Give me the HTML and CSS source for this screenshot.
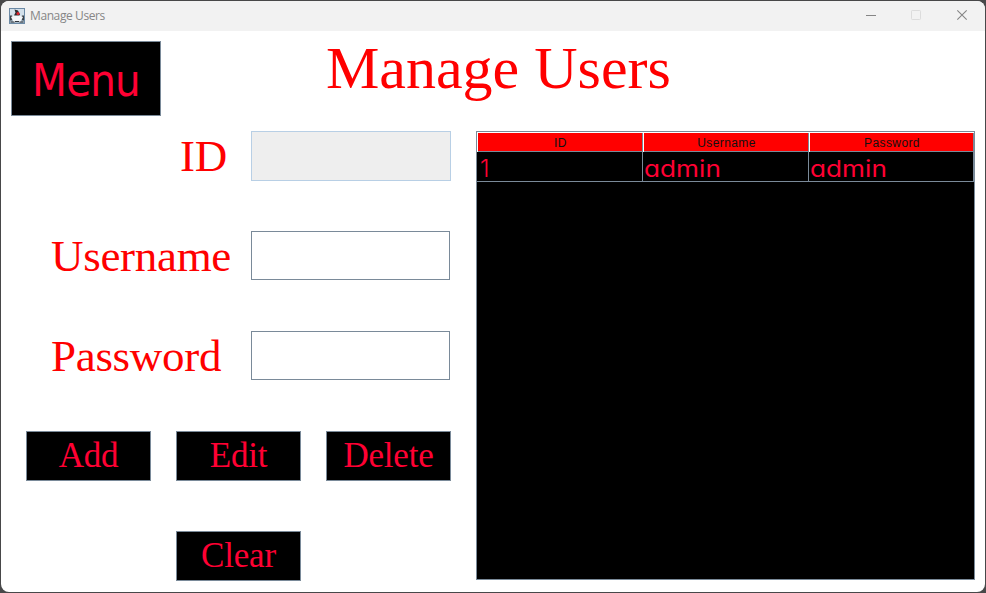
FILE: index.html
```html
<!DOCTYPE html>
<html lang="en">
<head>
<meta charset="utf-8">
<title>Manage Users</title>
<link rel="stylesheet" href="styles.css">
</head>
<body>
<div class="window">
  <header class="titlebar">
    <svg class="app-icon" width="16" height="16" viewBox="0 0 16 16">
      <rect x=".5" y=".5" width="15" height="15" fill="#d3e0ea" stroke="#6c8aa5"/>
      <rect x="1" y="9" width="14" height="6" fill="#a9bccb"/>
      <path d="M5.500 1.500L9 2.500l2 4-1 2H6l-1-1 1.500-3z" fill="#2b2b2e"/>
      <path d="M1 7.500l2 0 1 2-1.500 3H1zM15 7.500l-2 0-1 2 1.500 3H15z" fill="#3b4147"/>
      <path d="M2 9l3-1.500h6L14 9l-1 2-1 1v2H4v-2l-1-1z" fill="#f4f6f8"/>
      <circle cx="9" cy="5.500" r="1.500" fill="#e0202a"/>
      <path d="M1.500 14h4M6 13.500h4M10.500 14h4" stroke="#30343a"/>
    </svg>
    <span class="caption">Manage Users</span>
    <svg class="controls" width="120" height="30" viewBox="0 0 120 30" fill="none">
      <path d="M1 14.5h10" stroke="#858585"/>
      <rect x="46.5" y="9.5" width="9" height="9" rx=".8" stroke="#dcdcdc"/>
      <path d="M92.3 9.3l9.4 9.4M101.7 9.3l-9.4 9.4" stroke="#858585" stroke-width="1.1"/>
    </svg>
  </header>
  <main class="content">
    <div class="top">
      <button class="btn menu"><span class="menu-text">Menu</span></button>
      <h1 class="heading">Manage Users</h1>
    </div>
    <div class="columns">
      <section class="form">
        <div class="row"><label class="label label-id">ID</label><div class="field disabled"></div></div>
        <div class="row"><label class="label">Username</label><div class="field"></div></div>
        <div class="row"><label class="label">Password</label><div class="field"></div></div>
        <div class="actions">
          <button class="btn">Add</button>
          <button class="btn">Edit</button>
          <button class="btn">Delete</button>
        </div>
        <div class="actions"><button class="btn clear">Clear</button></div>
      </section>
      <section class="table">
        <div class="tr head"><div class="th">ID</div><div class="th">Username</div><div class="th">Password</div></div>
        <div class="tr"><div class="td one">1</div><div class="td"><span class="wide">admin</span></div><div class="td"><span class="wide">admin</span></div></div>
      </section>
    </div>
  </main>
</div>
</body>
</html>
```

FILE: styles.css
```css
* { box-sizing: border-box; }
body { margin: 0; height: 593px; padding: 1px; background: #484849; overflow: hidden; }
.window { width: 984px; height: 591px; background: #fff; border-radius: 8px; overflow: hidden; }
.titlebar { height: 30px; display: flex; align-items: center; padding-left: 8px; background: #f2f2f2; }
.app-icon { margin-top: -1px; }
.caption { margin-left: 5px; font: 12px/30px "Open Sans", sans-serif; letter-spacing: -.4px; color: #868686; }
.controls { margin-left: auto; }
.content { padding: 10px; }
.top { display: flex; height: 90px; }
.btn {
  width: 125px; height: 50px; padding: 0; border: 1px solid #7a8a99; background: #000; color: #ff0033;
  font: 35px/48px "Liberation Serif", serif; letter-spacing: -.2px; text-align: center;
}
.menu {
  width: 150px; height: 75px; font: 45px/73px "DejaVu Sans Condensed", "DejaVu Sans", sans-serif;
  letter-spacing: -.8px;
}
.menu-text { display: block; padding-top: 2px; }
.heading { margin: 0 0 0 165px; font: 60px/54px "Liberation Serif", serif; color: #f00; white-space: nowrap; }
.columns { display: flex; gap: 25px; }
.form { width: 440px; display: flex; flex-direction: column; gap: 50px; }
.row { display: flex; height: 50px; }
.label { width: 240px; padding-left: 40px; font: 45px/50px "Liberation Serif", serif; letter-spacing: -.3px; color: #f00; }
.label-id { padding-left: 169px; }
.field { width: 199px; height: 49px; border: 1px solid #7a8a99; }
.disabled { width: 200px; height: 50px; background: #eee; border-color: #b8cfe5; }
.actions { display: flex; gap: 25px; padding-left: 15px; }
.clear { margin-left: 150px; }
.table { width: 499px; height: 449px; border: 1px solid #7a8a99; background: #000; }
.tr { display: grid; grid-template-columns: 166px 166px 165px; }
.th {
  height: 20px; background: #f00; color: #111; border: solid #fff; border-width: 1px 0 0 1px;
  box-shadow: inset -1px -1px #7a8a99; font: 12px/20px "Liberation Sans", sans-serif;
  letter-spacing: .4px; text-align: center;
}
.td {
  height: 30px; padding-left: 1px; color: #ff0033; border: solid #7a8a99; border-width: 0 1px 1px 0;
  font: 300 24px/34px Inter, sans-serif; font-feature-settings: "cv11";
}
.one { padding-left: 3px; }
.wide { display: inline-block; font-weight: 400; font-size: 23px; transform: scaleX(1.14); transform-origin: 0 50%; }
```
